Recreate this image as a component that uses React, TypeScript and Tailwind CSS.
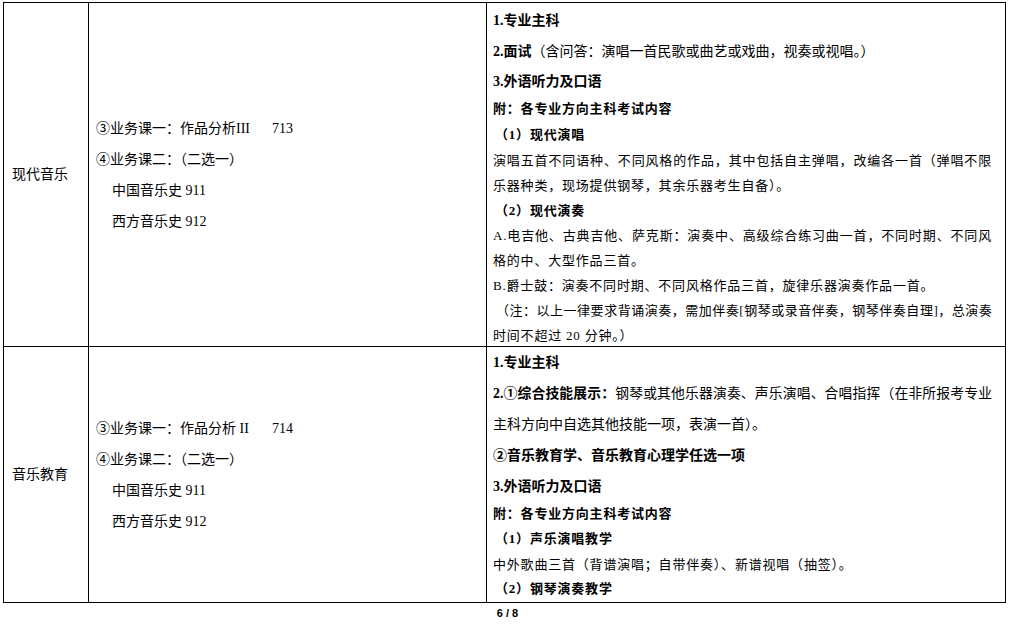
const F = "font-['Liberation_Serif','Noto_Sans_CJK_SC',serif]";

function J({ children, cls = "" }: { children: React.ReactNode; cls?: string }) {
  return <div className={`text-justify [text-align-last:justify] ${cls}`}>{children}</div>;
}

export default function App() {
  const kai = "text-[13px] tracking-[0.8px]";
  return (
    <div className={`w-[1010px] h-[627px] overflow-hidden bg-white text-black ${F}`}>
      <div className="ml-[3px] mt-[2px] w-[1003px] border border-black grid grid-cols-[85px_398px_518px]">
        {/* Row 1 */}
        <div className="h-[344px] border-r border-b border-black flex items-center pl-[8px] text-[14px]">
          现代音乐
        </div>
        <div className="h-[344px] border-r border-b border-black flex flex-col justify-center pl-[7px] text-[14px] leading-[31px]">
          <div className="flex">
            <span className="w-[176px]">③业务课一：作品分析III</span>
            <span>713</span>
          </div>
          <div>④业务课二：（二选一）</div>
          <div className="pl-[16px]">中国音乐史 911</div>
          <div className="pl-[16px]">西方音乐史 912</div>
        </div>
        <div className="h-[344px] border-b border-black pt-[1.5px] pl-[6px] pr-[13px] text-[14px] overflow-hidden">
          <div className="h-[31px] leading-[31px] font-bold">1.专业主科</div>
          <div className="h-[31px] leading-[31px]">
            <b>2.面试</b>（含问答：演唱一首民歌或曲艺或戏曲，视奏或视唱。）
          </div>
          <div className="h-[29px] leading-[29px] font-bold">3.外语听力及口语</div>
          <div className={`h-[26px] leading-[26px] font-bold ${kai}`}>附：各专业方向主科考试内容</div>
          <div className={`h-[26px] leading-[26px] font-bold ml-[2px] ${kai}`}>（1）现代演唱</div>
          <J cls={`h-[25px] leading-[25px] ${kai}`}>演唱五首不同语种、不同风格的作品，其中包括自主弹唱，改编各一首（弹唱不限</J>
          <div className={`h-[25px] leading-[25px] ${kai}`}>乐器种类，现场提供钢琴，其余乐器考生自备）。</div>
          <div className={`h-[25px] leading-[25px] font-bold ml-[2px] ${kai}`}>（2）现代演奏</div>
          <J cls={`h-[25px] leading-[25px] ${kai}`}>A.电吉他、古典吉他、萨克斯：演奏中、高级综合练习曲一首，不同时期、不同风</J>
          <div className={`h-[25px] leading-[25px] ${kai}`}>格的中、大型作品三首。</div>
          <div className={`h-[25px] leading-[25px] ${kai}`}>B.爵士鼓：演奏不同时期、不同风格作品三首，旋律乐器演奏作品一首。</div>
          <J cls="h-[25px] leading-[25px] ml-[3px] text-[13px] tracking-[0.2px]">（注：以上一律要求背诵演奏，需加伴奏[钢琴或录音伴奏，钢琴伴奏自理]，总演奏</J>
          <div className={`h-[25px] leading-[25px] ${kai}`}>时间不超过 20 分钟。）</div>
        </div>

        {/* Row 2 */}
        <div className="h-[255px] border-r border-black flex items-center pl-[8px] text-[14px]">
          音乐教育
        </div>
        <div className="h-[255px] border-r border-black flex flex-col justify-center pl-[7px] text-[14px] leading-[31px]">
          <div className="flex">
            <span className="w-[176px]">③业务课一：作品分析 II</span>
            <span>714</span>
          </div>
          <div>④业务课二：（二选一）</div>
          <div className="pl-[16px]">中国音乐史 911</div>
          <div className="pl-[16px]">西方音乐史 912</div>
        </div>
        <div className="h-[255px] pl-[6px] pr-[13px] text-[14px] overflow-hidden">
          <div className="h-[31px] leading-[31px] font-bold">1.专业主科</div>
          <J cls="h-[31px] leading-[31px] text-[13.8px]">
            <b>2.①综合技能展示：</b>钢琴或其他乐器演奏、声乐演唱、合唱指挥（在非所报考专业
          </J>
          <div className="h-[31px] leading-[31px]">主科方向中自选其他技能一项，表演一首）。</div>
          <div className="h-[31px] leading-[31px] font-bold">②音乐教育学、音乐教育心理学任选一项</div>
          <div className="h-[31px] leading-[31px] font-bold">3.外语听力及口语</div>
          <div className={`h-[24px] leading-[24px] font-bold ${kai}`}>附：各专业方向主科考试内容</div>
          <div className={`h-[26px] leading-[26px] font-bold ml-[2px] ${kai}`}>（1）声乐演唱教学</div>
          <div className={`h-[25px] leading-[25px] ${kai}`}>中外歌曲三首（背谱演唱；自带伴奏）、新谱视唱（抽签）。</div>
          <div className={`h-[24px] leading-[24px] font-bold ml-[2px] ${kai}`}>（2）钢琴演奏教学</div>
        </div>
      </div>
      <div className="ml-[3px] w-[1003px] pl-[6px] h-[20px] leading-[20px] text-center text-[11px] font-bold font-['Liberation_Sans',sans-serif]">
        6 / 8
      </div>
    </div>
  );
}
